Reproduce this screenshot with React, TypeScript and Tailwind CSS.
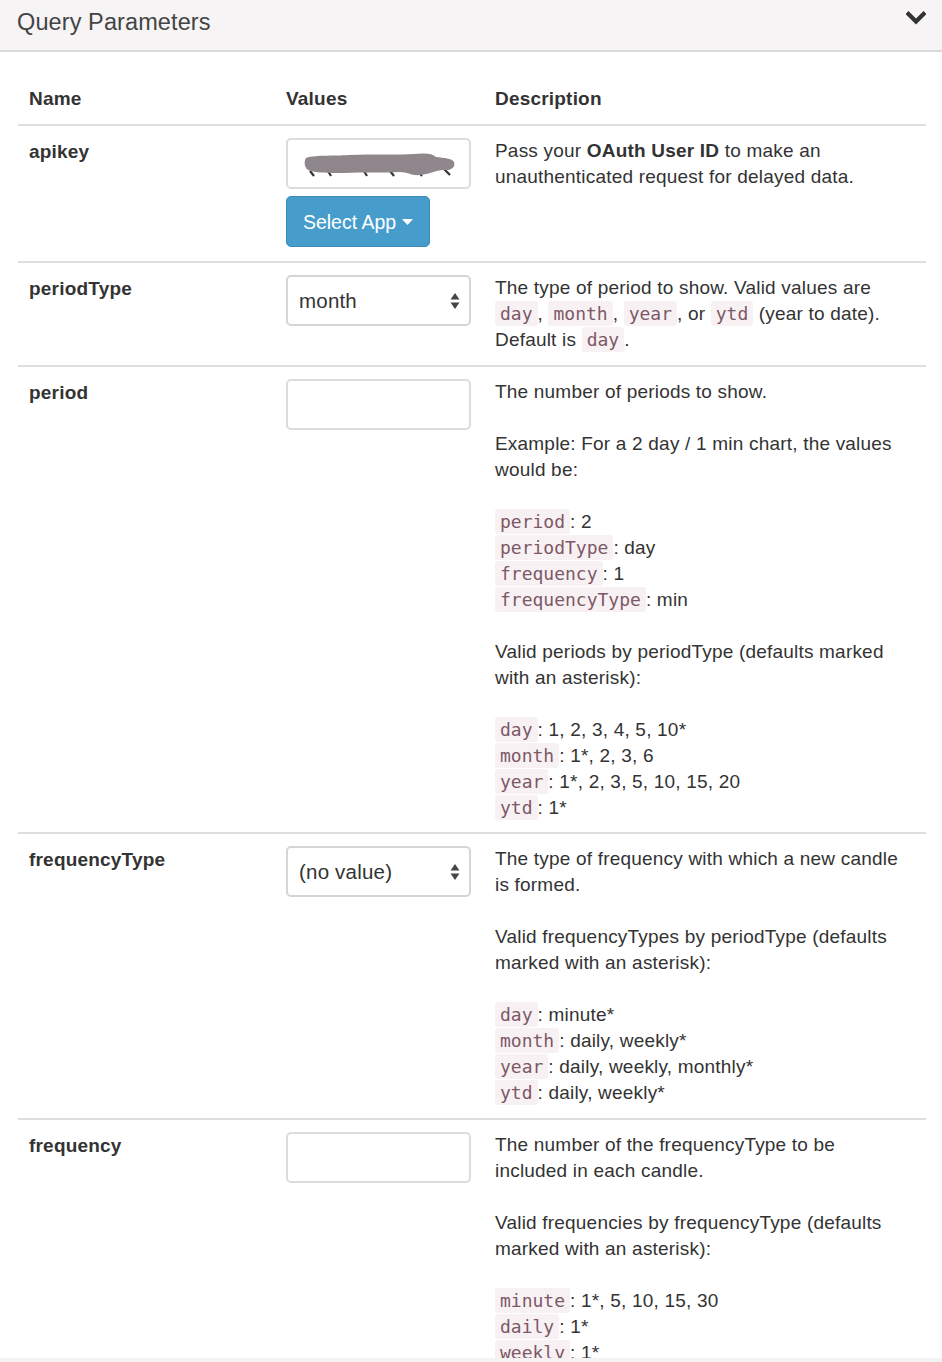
import React from "react";

const C = ({ children }: { children: React.ReactNode }) => (
  <code className="bg-[#f8f1f3] text-[#7d5866] rounded-[3px] px-[5px] py-[2px] text-[18px] tracking-normal font-['DejaVu_Sans_Mono',monospace]">
    {children}
  </code>
);

const Arrows = () => (
  <svg width="10" height="18" viewBox="0 0 10 18" className="absolute right-[9px] top-[15px]">
    <path d="M5 1 L9.5 7.5 H0.5 Z" fill="#444" />
    <path d="M5 17 L9.5 10.5 H0.5 Z" fill="#444" />
  </svg>
);

const Select = ({ value }: { value: string }) => (
  <div className="relative h-[51px] w-[185px] rounded-[5px] border-2 border-[#d5d5d5] bg-white pl-[11px] flex items-center text-[20.5px] text-[#333]">
    {value}
    <Arrows />
  </div>
);

const Input = ({ children }: { children?: React.ReactNode }) => (
  <div className="relative h-[51px] w-[185px] rounded-[5px] border-2 border-[#dcdcdc] bg-white">{children}</div>
);

const Row = ({ name, values, children }: { name: string; values: React.ReactNode; children: React.ReactNode }) => (
  <div className="grid grid-cols-[257px_209px_442px] border-t-2 border-[#dedede]">
    <div className="px-[11px] pt-[13px] pb-[12px] font-bold">{name}</div>
    <div className="px-[11px] pt-[12px] pb-[13px]">{values}</div>
    <div className="pl-[11px] pr-[20px] pt-[12px] pb-[12px]">{children}</div>
  </div>
);

export default function App() {
  return (
    <div className="relative h-[1362px] overflow-hidden bg-white font-['Liberation_Sans',Arial,sans-serif] text-[19px] tracking-[0.2px] leading-[26px] text-[#333]">
      <div className="flex h-[52px] items-start justify-between border-b-2 border-[#d9d9d9] bg-[#f6f4f5] pl-[17px] pr-[16px]">
        <div className="pt-[7px] text-[23.5px] leading-[30px] tracking-[0.1px] text-[#444]">Query Parameters</div>
        <svg width="20" height="16" viewBox="0 0 20 16" className="mt-[10px]">
          <path d="M2.5 4 L10 11.5 L17.5 4" stroke="#333" strokeWidth="4.2" fill="none" strokeLinecap="square" />
        </svg>
      </div>
      <div className="ml-[18px] mr-[16px] mt-[21px] w-[908px]">
        <div className="grid grid-cols-[257px_209px_442px] font-bold">
          <div className="px-[11px] pt-[13px] pb-[12px]">Name</div>
          <div className="px-[11px] pt-[13px] pb-[12px]">Values</div>
          <div className="px-[11px] pt-[13px] pb-[12px]">Description</div>
        </div>
        <Row
          name="apikey"
          values={
            <div className="flex flex-col gap-[7px] pb-[1px]">
              <Input>
                <svg width="156" height="30" viewBox="0 0 156 30" className="absolute left-[16px] top-[9px]">
                  <path d="M6 22 L10 27 M24 22 L27 27 M60 22 L63 27 M86 22 L90 27 M112 20 L118 27 M140 20 L146 26" stroke="#333" strokeWidth="2.2" />
                  <path d="M2 9 C8 6 30 7 45 6 C70 5 95 6 110 5 C122 4 128 4 132 8 C140 9 148 9 150 13 C152 19 146 22 138 21 C130 22 126 25 116 26 C108 27 104 23 96 23 C80 24 60 23 40 24 C25 24 10 24 4 21 C0 18 0 12 2 9 Z" fill="#8f878b" />
                </svg>
              </Input>
              <div className="flex h-[51px] w-[144px] items-center justify-center gap-[6px] rounded-[5px] border border-[#3b89b9] bg-[#469dcc] text-[19.5px] tracking-normal text-white">
                Select App
                <svg width="11" height="6" viewBox="0 0 11 6"><path d="M0 0 H11 L5.5 6 Z" fill="white" /></svg>
              </div>
            </div>
          }
        >
          <p>
            Pass your <b>OAuth User ID</b> to make an unauthenticated request for delayed data.
          </p>
        </Row>
        <Row name="periodType" values={<Select value="month" />}>
          <p>
            The type of period to show. Valid values are <C>day</C>, <C>month</C>, <C>year</C>, or <C>ytd</C> (year to
            date). Default is <C>day</C>.
          </p>
        </Row>
        <Row name="period" values={<Input />}>
          <p className="mb-[26px]">The number of periods to show.</p>
          <p className="mb-[26px]">Example: For a 2 day / 1 min chart, the values would be:</p>
          <p className="mb-[26px]">
            <C>period</C>: 2<br />
            <C>periodType</C>: day<br />
            <C>frequency</C>: 1<br />
            <C>frequencyType</C>: min
          </p>
          <p className="mb-[26px]">Valid periods by periodType (defaults marked with an asterisk):</p>
          <p className="mb-[-1px]">
            <C>day</C>: 1, 2, 3, 4, 5, 10*<br />
            <C>month</C>: 1*, 2, 3, 6<br />
            <C>year</C>: 1*, 2, 3, 5, 10, 15, 20<br />
            <C>ytd</C>: 1*
          </p>
        </Row>
        <Row name="frequencyType" values={<Select value="(no value)" />}>
          <p className="mb-[26px]">The type of frequency with which a new candle is formed.</p>
          <p className="mb-[26px]">Valid frequencyTypes by periodType (defaults marked with an asterisk):</p>
          <p>
            <C>day</C>: minute*<br />
            <C>month</C>: daily, weekly*<br />
            <C>year</C>: daily, weekly, monthly*<br />
            <C>ytd</C>: daily, weekly*
          </p>
        </Row>
        <Row name="frequency" values={<Input />}>
          <p className="mb-[26px]">The number of the frequencyType to be included in each candle.</p>
          <p className="mb-[26px]">Valid frequencies by frequencyType (defaults marked with an asterisk):</p>
          <p>
            <C>minute</C>: 1*, 5, 10, 15, 30<br />
            <C>daily</C>: 1*<br />
            <C>weekly</C>: 1*<br />
            <C>monthly</C>: 1*
          </p>
        </Row>
      </div>
      <div className="absolute bottom-0 left-0 right-0 h-[4px] bg-[#f4f2f3]" />
    </div>
  );
}
